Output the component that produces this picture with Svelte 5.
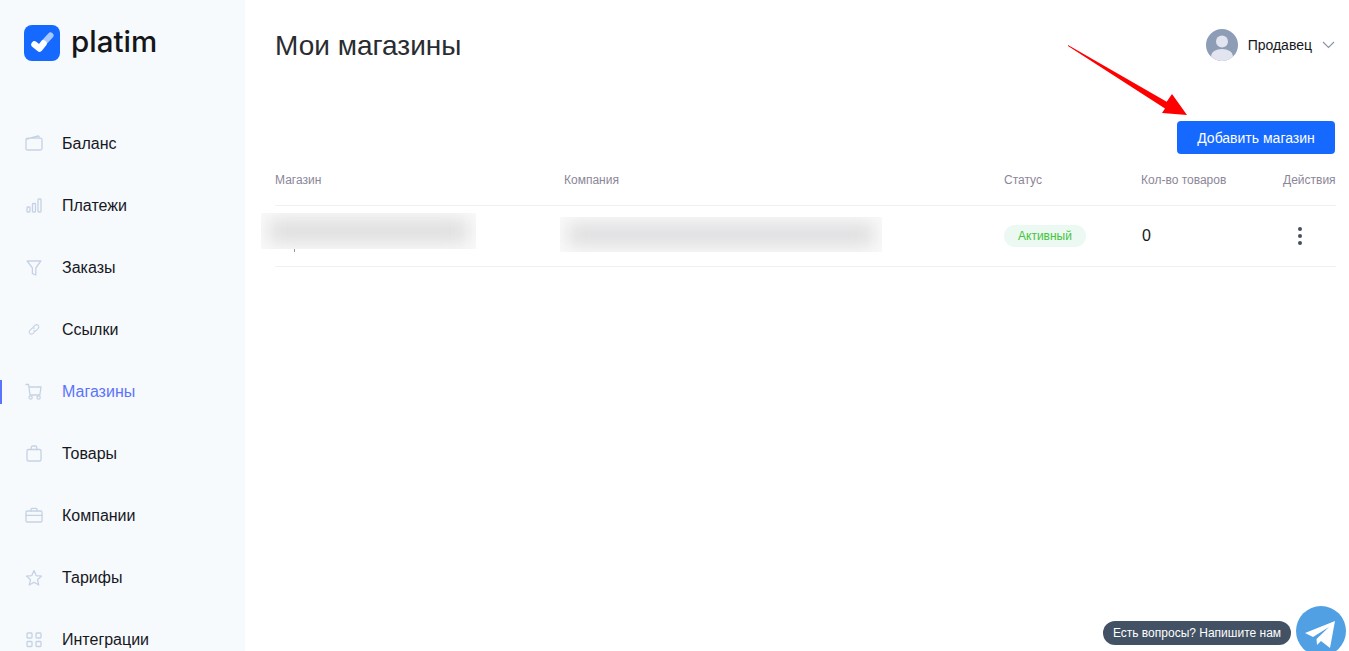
<script>
  const nav = [
    { label: 'Баланс', icon: 'wallet' },
    { label: 'Платежи', icon: 'bars' },
    { label: 'Заказы', icon: 'funnel' },
    { label: 'Ссылки', icon: 'link' },
    { label: 'Магазины', icon: 'cart', active: true },
    { label: 'Товары', icon: 'bag' },
    { label: 'Компании', icon: 'case' },
    { label: 'Тарифы', icon: 'star' },
    { label: 'Интеграции', icon: 'grid' }
  ];
</script>

<div class="app">
  <aside class="side">
    <div class="logo">
      <svg width="36" height="36" viewBox="0 0 36 36">
        <rect width="36" height="36" rx="8" fill="#1669ff" />
        <path d="M20 17.5 L26.5 10.5" stroke="#a9c8ff" stroke-width="6" stroke-linecap="round" fill="none" />
        <path d="M10.5 19.5 L15.5 23.5 L19.5 18.5" stroke="#fff" stroke-width="6.5" stroke-linecap="round" stroke-linejoin="round" fill="none" />
      </svg>
      <span class="brand">platim</span>
    </div>
    <nav class="nav">
      {#each nav as item}
        <div class="item" class:active={item.active}>
          <svg class="ico" width="18" height="18" viewBox="0 0 18 18" fill="none" stroke="#c6d2e4" stroke-width="1.3" stroke-linecap="round" stroke-linejoin="round">
            {#if item.icon === 'wallet'}
              <path d="M2 4 L13 1 Q14.2 1 14.2 2.4 V3.2 M2.6 3.2 H15.4 Q17 3.2 17 4.8 V13.5 Q17 15 15.4 15 H2.6 Q1 15 1 13.5 V4.8 Q1 3.2 2.6 3.2 Z" />
            {:else if item.icon === 'bars'}
              <rect x="2" y="10" width="3" height="5" rx="0.8" />
              <rect x="7.5" y="6.5" width="3" height="8.5" rx="0.8" />
              <rect x="13" y="2" width="3" height="13" rx="0.8" />
            {:else if item.icon === 'funnel'}
              <path d="M2.2 2 H15.8 L10.8 9 V16 L7.4 14.7 V9 Z" />
            {:else if item.icon === 'link'}
              <g transform="translate(1.2 0.6) scale(0.87)">
                <path d="M7.8 6.6 L10 4.4 Q12 2.6 13.9 4.2 Q15.4 6 13.7 8 L11.5 10.2 Q10 11.3 8.6 10.4" />
                <path d="M10.2 11.2 L8 13.5 Q6 15.3 4.1 13.8 Q2.6 12 4.3 10 L6.5 7.8 Q8 6.7 9.4 7.6" />
              </g>
            {:else if item.icon === 'cart'}
              <path d="M1 1.5 H3.6 L5 12 H14.8 L16 4 H3.9" />
              <circle cx="5.6" cy="14.5" r="1.6" />
              <circle cx="13.6" cy="14.5" r="1.6" />
            {:else if item.icon === 'bag'}
              <rect x="2" y="4.5" width="14" height="11.5" rx="1.3" />
              <path d="M6.2 4.5 V2.6 Q6.2 1 7.8 1 H10.2 Q11.8 1 11.8 2.6 V4.5" />
            {:else if item.icon === 'case'}
              <rect x="1" y="4" width="16" height="11" rx="1.3" />
              <path d="M6 4 V2.4 Q6 1.4 7 1.4 H11 Q12 1.4 12 2.4 V4 M1 8.4 H17" />
            {:else if item.icon === 'star'}
              <path d="M9 1.6 L11.2 6.6 L16.6 7.1 L12.5 10.7 L13.7 16 L9 13.2 L4.3 16 L5.5 10.7 L1.4 7.1 L6.8 6.6 Z" />
            {:else}
              <rect x="2" y="2" width="5" height="5" rx="0.8" />
              <rect x="11" y="2" width="5" height="5" rx="0.8" />
              <rect x="2" y="10.5" width="5" height="5" rx="0.8" />
              <rect x="11" y="10.5" width="5" height="5" rx="0.8" />
            {/if}
          </svg>
          <span>{item.label}</span>
        </div>
      {/each}
    </nav>
  </aside>

  <main class="main">
    <header class="top">
      <h1>Мои магазины</h1>
      <div class="user">
        <svg width="32" height="32" viewBox="0 0 32 32">
          <defs><clipPath id="av"><circle cx="16" cy="16" r="16" /></clipPath></defs>
          <circle cx="16" cy="16" r="16" fill="#8e9db6" />
          <g clip-path="url(#av)" fill="#e2e4ef">
            <circle cx="16" cy="12.5" r="6" />
            <ellipse cx="16" cy="27" rx="11" ry="7" />
          </g>
        </svg>
        <span>Продавец</span>
        <svg width="13" height="8" viewBox="0 0 13 8" fill="none" stroke="#8a93a3" stroke-width="1.1"><path d="M1 1 L6.5 6.5 L12 1" /></svg>
      </div>
    </header>

    <div class="actions"><button>Добавить магазин</button></div>

    <div class="table">
      <div class="row head">
        <div>Магазин</div>
        <div>Компания</div>
        <div>Статус</div>
        <div>Кол-во товаров</div>
        <div>Действия</div>
      </div>
      <div class="row body">
        <div class="cell-blur"><div class="mask one"><div class="blur"></div></div><i class="frag"></i></div>
        <div class="cell-blur"><div class="mask two"><div class="blur"></div></div></div>
        <div><span class="badge">Активный</span></div>
        <div class="count">0</div>
        <div class="dots"><i></i><i></i><i></i></div>
      </div>
    </div>
  </main>

  <svg class="arrow" width="122" height="74" viewBox="0 0 122 74">
    <path d="M0 0 L98.7 56.7 L104 49 L119 70 L94 68 L97 63.5 L0 1 Z" fill="#fe0000" />
  </svg>

  <div class="chat">
    <span class="pill">Есть вопросы? Напишите нам</span>
    <svg width="50" height="50" viewBox="0 0 50 50">
      <circle cx="25" cy="25" r="25" fill="#50a0e3" />
      <path d="M9 27 L39 15 L34 42 L25 35 L21 39 L20.5 33 L33 21 L17 31 Z" fill="#fff" />
    </svg>
  </div>
</div>

<style>
  :global(body) { margin: 0; background: #fff; }
  .app {
    position: relative;
    display: flex;
    height: 100vh;
    overflow: hidden;
    font-family: "Liberation Sans", Arial, sans-serif;
    color: #16181d;
  }
  .side {
    flex: 0 0 245px;
    background: #f7fafd;
    box-sizing: border-box;
    padding-top: 25px;
  }
  .logo { display: flex; align-items: center; gap: 11px; padding-left: 24px; height: 36px; }
  .brand {
    font-family: Inter, sans-serif;
    font-size: 29.5px;
    font-weight: 500;
    color: #14161a;
    line-height: 36px;
    margin-top: -5px;
  }
  .nav { margin-top: 52px; display: flex; flex-direction: column; }
  .item {
    position: relative;
    height: 62px;
    display: flex;
    align-items: center;
    padding-left: 25px;
    gap: 19px;
    font-size: 16px;
    color: #16181d;
  }
  .item.active { color: #5c74fb; }
  .item.active::before {
    content: "";
    position: absolute;
    left: 0;
    top: 19px;
    width: 2px;
    height: 24px;
    background: #5c74fb;
  }
  .main { flex: 1; box-sizing: border-box; padding: 0 13px 0 30px; min-width: 0; }
  .top { display: flex; justify-content: space-between; align-items: center; height: 90px; }
  h1 { margin: 2px 0 0; font-size: 28px; font-weight: 400; color: #2a2c31; }
  .user { display: flex; align-items: center; gap: 10px; font-size: 14px; color: #16181d; padding-right: 1px; }
  .actions { display: flex; justify-content: flex-end; padding-top: 31px; padding-right: 1px; }
  button {
    width: 158px;
    height: 33px;
    border: 0;
    border-radius: 4px;
    background: #1669ff;
    color: #fff;
    font: 400 14px "Liberation Sans", Arial, sans-serif;
    padding: 0;
  }
  .row { display: grid; grid-template-columns: 289px 440px 137px 142px 1fr; align-items: center; }
  .head { height: 51px; font-size: 12px; color: #8b8698; border-bottom: 1px solid #edf0f5; }
  .head > div:last-child { white-space: nowrap; }
  .body { height: 60px; border-bottom: 1px solid #edf0f5; }
  .cell-blur { position: relative; height: 100%; }
  .mask { position: absolute; overflow: hidden; background: #fafafa; }
  .blur { position: absolute; inset: 6px 8px; filter: blur(9px); background: #dedee0; }
  .one { left: -14px; top: 7px; width: 215px; height: 36px; }
  .two { left: -4px; top: 11px; width: 322px; height: 35px; }
  .frag { position: absolute; left: 19px; top: 43px; width: 1px; height: 3px; background: #999; }
  .badge {
    display: inline-flex;
    align-items: center;
    justify-content: center;
    width: 82px;
    height: 22px;
    border-radius: 11px;
    background: #ebf9f2;
    color: #45c43c;
    font-size: 12px;
  }
  .count { font-size: 16px; color: #16181d; padding-left: 1px; }
  .dots { display: flex; flex-direction: column; align-items: center; gap: 3px; width: 34px; }
  .dots i { width: 4px; height: 4px; border-radius: 50%; background: #46505f; }
  .arrow { position: absolute; left: 1068px; top: 45px; }
  .chat { position: absolute; left: 1103px; top: 606px; display: flex; gap: 5px; }
  .pill {
    margin-top: 15px;
    width: 188px;
    height: 24px;
    display: flex;
    align-items: center;
    justify-content: center;
    border-radius: 12px;
    background: #425164;
    color: #fff;
    font-size: 12px;
  }
</style>
